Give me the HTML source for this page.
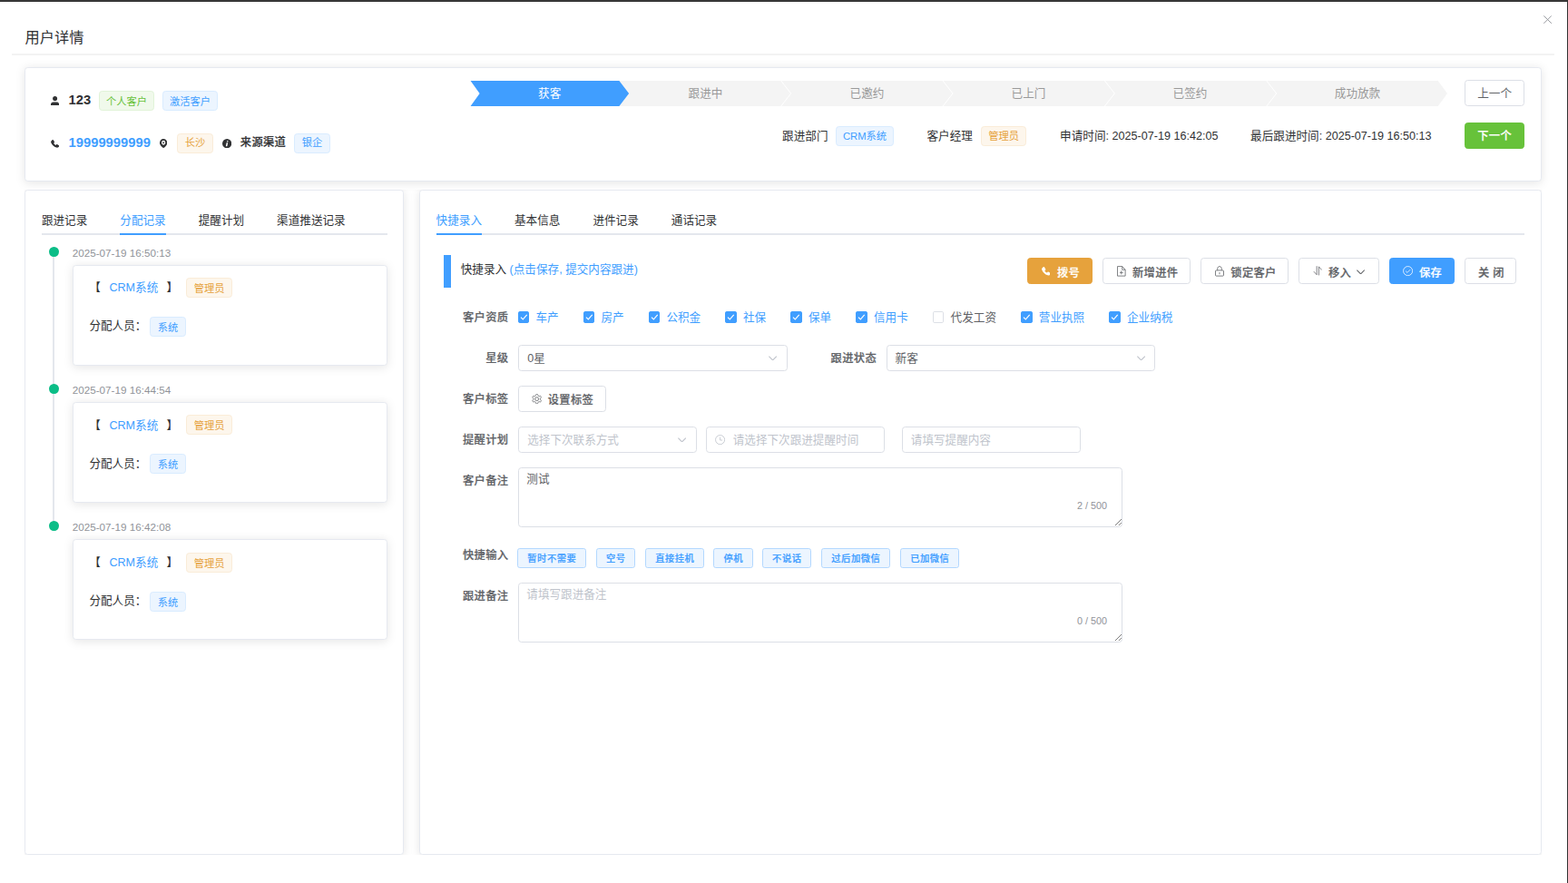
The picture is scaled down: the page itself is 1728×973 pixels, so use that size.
<!DOCTYPE html>
<html lang="zh-CN">
<head>
<meta charset="utf-8">
<title>用户详情</title>
<style>
html,body{margin:0;padding:0;background:#fff;width:1728px;height:973px;overflow:hidden}
body{font-family:"Liberation Sans","Noto Sans CJK SC",sans-serif;color:#303133;position:relative}
#stage{position:absolute;left:0;top:0;width:1920px;height:1082px;zoom:0.9;background:#fff;overflow:hidden}
@supports not (zoom:0.9){#stage{transform:scale(0.9);transform-origin:0 0}}
.abs{position:absolute;box-sizing:border-box}
.tx{white-space:nowrap}
.b{font-weight:500;-webkit-text-stroke:0.25px currentColor;font-size:13.6px !important;letter-spacing:0.4px;margin-top:0.9px}
.bb{font-weight:700}
.card{background:#fff;border:1px solid #e6e9f0;border-radius:4px;box-shadow:0 2px 12px 0 rgba(0,0,0,.1)}
.tag{display:flex;align-items:center;justify-content:center;border:1px solid #d9ecff;background:#ecf5ff;color:#409EFF;border-radius:4px;white-space:nowrap;line-height:1}
.tag span{position:relative;top:0px}
.tag.success{background:#f0f9eb;border-color:#e1f3d8;color:#67c23a}
.tag.warning{background:#fdf6ec;border-color:#faecd8;color:#e6a23c}
.tag.quick{border-color:#b3d8ff;font-weight:500;-webkit-text-stroke:0.25px currentColor;border-radius:3px;font-size:11.4px !important;letter-spacing:0.6px}
.tag.quick span{top:1.5px;left:0.3px}
.btn{border:1px solid #DCDFE6;background:#fff;border-radius:4px}
.btn.nb{border-color:transparent}
.btn.success{background:#67C23A;border-color:#67C23A}
.btn.warning{background:#E6A23C;border-color:#E6A23C}
.btn.primary{background:#409EFF;border-color:#409EFF}
.cb{border:1px solid #DCDFE6;border-radius:2px;background:#fff}
.cb.on{background:#409EFF;border-color:#409EFF}
.cb svg{position:absolute;left:-1px;top:-1px;width:14px;height:14px}
.inp{border:1px solid #DCDFE6;border-radius:4px;background:#fff}
.ta{border:1px solid #DCDFE6;border-radius:4px;background:#fff}
#topbar{position:absolute;left:0;top:0;width:1728px;height:2px;background:linear-gradient(#3c3c3c 0,#3c3c3c 1px,#2f2f2f 1px,#2f2f2f 2px)}
#rightbar{position:absolute;left:1727px;top:0;width:1px;height:973px;background:#313131}
</style>
</head>
<body>
<div id="stage">
<div class="abs tx " style="left:30.67px;top:33.30px;font-size:18px;line-height:26px;color:#303133">用户详情</div>
<svg class="abs" style="left:1889.56px;top:19.33px;width:10.22px;height:10.22px;" viewBox="0 0 100 100" preserveAspectRatio="none"><path d="M4 4 L96 96 M96 4 L4 96" fill="none" stroke="#909399" stroke-width="10"/></svg>
<div class="abs " style="left:14.44px;top:65.56px;width:1888.89px;height:2.22px;background:#f3f3f3"></div>
<div class="abs card" style="left:30px;top:82.22px;width:1857.78px;height:140px;"></div>
<div class="abs" style="left:30px;top:232.22px;width:1857.78px;height:814.44px;overflow:hidden">
<div class="abs card" style="left:0px;top:0px;width:464.67px;height:814.44px;"></div>
<div class="abs card" style="left:483.33px;top:0px;width:1374.44px;height:814.44px;"></div>
</div>
<svg class="abs" style="left:62.11px;top:118.11px;width:10.22px;height:11.22px;" viewBox="0 0 100 100" preserveAspectRatio="none"><ellipse cx="50" cy="26" rx="27" ry="26" fill="#303133"/><path d="M0 100 L0 90 C0 75 12 65 28 65 L72 65 C88 65 100 75 100 90 L100 100 Z" fill="#303133"/></svg>
<div class="abs tx bb" style="left:84px;top:110.87px;font-size:16.4px;line-height:24.4px;color:#303133">123</div>
<div class="abs tag success" style="left:121.13px;top:111.13px;width:67.78px;height:24.44px;font-size:12.5px;"><span style="top:2px">个人客户</span></div>
<div class="abs tag primary" style="left:198.91px;top:111.13px;width:67.78px;height:24.44px;font-size:12.5px;"><span style="top:2px">激活客户</span></div>
<svg class="abs" style="left:62.11px;top:171px;width:10.44px;height:9.78px;" viewBox="0 0 100 100" preserveAspectRatio="none"><path d="M17 3 C22 -1 28 0 31 6 L42 25 C45 30 44 34 40 38 L33 44 C38 55 47 64 58 69 L64 62 C67 58 72 57 77 60 L95 71 C101 74 101 80 97 84 L88 93 C82 99 74 100 65 97 C37 87 14 64 3 36 C0 27 1 19 7 13 Z" fill="#303133"/></svg>
<div class="abs tx bb" style="left:84px;top:163.20px;font-size:16.4px;line-height:24.4px;color:#409EFF">19999999999</div>
<svg class="abs" style="left:195.78px;top:170.22px;width:9.22px;height:11.11px;" viewBox="0 0 100 100" preserveAspectRatio="none"><path d="M50 0 C22 0 0 20 0 45 C0 70 32 92 50 100 C68 92 100 70 100 45 C100 20 78 0 50 0 Z" fill="#303133"/><circle cx="50" cy="43" r="25" fill="#fff"/><circle cx="50" cy="43" r="10" fill="#303133"/></svg>
<div class="abs tag warning" style="left:216.69px;top:163.36px;width:44.44px;height:24.44px;font-size:12.5px;"><span>长沙</span></div>
<svg class="abs" style="left:271.78px;top:170px;width:11.44px;height:11.44px;" viewBox="0 0 100 100" preserveAspectRatio="none"><circle cx="50" cy="50" r="50" fill="#303133"/><circle cx="56" cy="27" r="7.5" fill="#fff"/><path d="M45 41 L60 41 L52 80 L37 80 Z" fill="#fff"/></svg>
<div class="abs tx b" style="left:294.22px;top:163.86px;font-size:14px;line-height:22px;color:#303133">来源渠道</div>
<div class="abs tag primary" style="left:360.02px;top:163.36px;width:44.44px;height:24.44px;font-size:12.5px;"><span>银企</span></div>
<svg class="abs" style="left:0;top:0;width:1920px;height:140px" viewBox="0 0 1920 140"><polygon points="758.22,98.89 1760.78,98.89 1772.22,114.44 1760.78,130 758.22,130" fill="#f4f4f4"/><polyline points="956.39,98.89 968.5,114.44 956.39,130" fill="none" stroke="#fff" stroke-width="1.1"/><polyline points="1154.56,98.89 1166.67,114.44 1154.56,130" fill="none" stroke="#fff" stroke-width="1.1"/><polyline points="1352.72,98.89 1364.83,114.44 1352.72,130" fill="none" stroke="#fff" stroke-width="1.1"/><polyline points="1550.89,98.89 1563,114.44 1550.89,130" fill="none" stroke="#fff" stroke-width="1.1"/><polygon points="576.17,98.89 758.22,98.89 770.11,114.44 758.22,130 576.17,130 587.33,114.44" fill="#409EFF"/></svg>
<div class="abs tx " style="left:573px;top:104.97px;font-size:14px;line-height:22px;width:200px;text-align:center;color:#fff">获客</div>
<div class="abs tx " style="left:763.89px;top:104.97px;font-size:14px;line-height:22px;width:200px;text-align:center;color:#999">跟进中</div>
<div class="abs tx " style="left:961.67px;top:104.97px;font-size:14px;line-height:22px;width:200px;text-align:center;color:#999">已邀约</div>
<div class="abs tx " style="left:1159.44px;top:104.97px;font-size:14px;line-height:22px;width:200px;text-align:center;color:#999">已上门</div>
<div class="abs tx " style="left:1357.22px;top:104.97px;font-size:14px;line-height:22px;width:200px;text-align:center;color:#999">已签约</div>
<div class="abs tx " style="left:1562.22px;top:104.97px;font-size:14px;line-height:22px;width:200px;text-align:center;color:#999">成功放款</div>
<div class="abs btn" style="left:1793.33px;top:98.22px;width:73.33px;height:32px;"></div>
<div class="abs tx " style="left:1796.78px;top:104.30px;font-size:14px;line-height:22px;width:66.67px;text-align:center;color:#606266">上一个</div>
<div class="abs btn success nb" style="left:1793.33px;top:150.11px;width:73.33px;height:32px;"></div>
<div class="abs tx b" style="left:1796.78px;top:156.30px;font-size:14px;line-height:22px;width:66.67px;text-align:center;color:#fff">下一个</div>
<div class="abs tx " style="left:957.89px;top:156.52px;font-size:14px;line-height:22px;color:#303133">跟进部门</div>
<div class="abs tag primary" style="left:1023.36px;top:154.47px;width:71.11px;height:24.44px;font-size:12.5px;"><span style="top:1px">CRM系统</span></div>
<div class="abs tx " style="left:1135px;top:156.52px;font-size:14px;line-height:22px;color:#303133">客户经理</div>
<div class="abs tag warning" style="left:1201.13px;top:154.47px;width:55.56px;height:24.44px;font-size:12.5px;"><span style="top:1px">管理员</span></div>
<div class="abs tx " style="left:1297.89px;top:156.52px;font-size:14px;line-height:22px;color:#303133">申请时间: 2025-07-19 16:42:05</div>
<div class="abs tx " style="left:1531.22px;top:156.52px;font-size:14px;line-height:22px;color:#303133">最后跟进时间: 2025-07-19 16:50:13</div>
<div class="abs " style="left:51px;top:285.61px;width:423.33px;height:2.22px;background:#E4E7ED"></div>
<div class="abs tx " style="left:51px;top:259.86px;font-size:14px;line-height:22px;color:#303133">跟进记录</div>
<div class="abs tx " style="left:147px;top:259.86px;font-size:14px;line-height:22px;color:#409EFF">分配记录</div>
<div class="abs " style="left:147px;top:285.61px;width:56px;height:2.22px;background:#409EFF"></div>
<div class="abs tx " style="left:243px;top:259.86px;font-size:14px;line-height:22px;color:#303133">提醒计划</div>
<div class="abs tx " style="left:339px;top:259.86px;font-size:14px;line-height:22px;color:#303133">渠道推送记录</div>
<div class="abs " style="left:534px;top:285.61px;width:1332.67px;height:2.22px;background:#E4E7ED"></div>
<div class="abs tx " style="left:534px;top:259.86px;font-size:14px;line-height:22px;color:#409EFF">快捷录入</div>
<div class="abs " style="left:534px;top:285.61px;width:56px;height:2.22px;background:#409EFF"></div>
<div class="abs tx " style="left:630px;top:259.86px;font-size:14px;line-height:22px;color:#303133">基本信息</div>
<div class="abs tx " style="left:726px;top:259.86px;font-size:14px;line-height:22px;color:#303133">进件记录</div>
<div class="abs tx " style="left:822px;top:259.86px;font-size:14px;line-height:22px;color:#303133">通话记录</div>
<div class="abs " style="left:64.5px;top:308.22px;width:2.22px;height:336px;background:#E4E7ED"></div>
<div class="abs " style="left:60px;top:302.22px;width:12px;height:12px;background:#0bbd87;border-radius:50%"></div>
<div class="abs tx " style="left:88.56px;top:299.89px;font-size:13px;line-height:21px;color:#909399">2025-07-19 16:50:13</div>
<div class="abs card" style="left:89.33px;top:324.33px;width:385px;height:123.33px;"></div>
<div class="abs tx " style="left:109.22px;top:342.71px;font-size:14px;line-height:22px;color:#303133">【</div>
<div class="abs tx " style="left:133.78px;top:342.71px;font-size:14px;line-height:22px;color:#409EFF">CRM系统</div>
<div class="abs tx " style="left:203.89px;top:342.71px;font-size:14px;line-height:22px;color:#303133">】</div>
<div class="abs tag warning" style="left:227.8px;top:340.02px;width:56.67px;height:24.44px;font-size:12.5px;"><span style="top:2px">管理员</span></div>
<div class="abs tx " style="left:109.33px;top:389.30px;font-size:14px;line-height:22px;color:#303133">分配人员：</div>
<div class="abs tag primary" style="left:183.36px;top:387.8px;width:44.44px;height:24.44px;font-size:12.5px;"><span style="top:2px">系统</span></div>
<div class="abs " style="left:60px;top:470.22px;width:12px;height:12px;background:#0bbd87;border-radius:50%"></div>
<div class="abs tx " style="left:88.56px;top:467.89px;font-size:13px;line-height:21px;color:#909399">2025-07-19 16:44:54</div>
<div class="abs card" style="left:89.33px;top:492.33px;width:385px;height:123.33px;"></div>
<div class="abs tx " style="left:109.22px;top:510.71px;font-size:14px;line-height:22px;color:#303133">【</div>
<div class="abs tx " style="left:133.78px;top:510.71px;font-size:14px;line-height:22px;color:#409EFF">CRM系统</div>
<div class="abs tx " style="left:203.89px;top:510.71px;font-size:14px;line-height:22px;color:#303133">】</div>
<div class="abs tag warning" style="left:227.8px;top:507.8px;width:56.67px;height:24.44px;font-size:12.5px;"><span style="top:2px">管理员</span></div>
<div class="abs tx " style="left:109.33px;top:557.30px;font-size:14px;line-height:22px;color:#303133">分配人员：</div>
<div class="abs tag primary" style="left:183.36px;top:555.58px;width:44.44px;height:24.44px;font-size:12.5px;"><span style="top:2px">系统</span></div>
<div class="abs " style="left:60px;top:638.22px;width:12px;height:12px;background:#0bbd87;border-radius:50%"></div>
<div class="abs tx " style="left:88.56px;top:635.89px;font-size:13px;line-height:21px;color:#909399">2025-07-19 16:42:08</div>
<div class="abs card" style="left:89.33px;top:660.33px;width:385px;height:123.33px;"></div>
<div class="abs tx " style="left:109.22px;top:678.71px;font-size:14px;line-height:22px;color:#303133">【</div>
<div class="abs tx " style="left:133.78px;top:678.71px;font-size:14px;line-height:22px;color:#409EFF">CRM系统</div>
<div class="abs tx " style="left:203.89px;top:678.71px;font-size:14px;line-height:22px;color:#303133">】</div>
<div class="abs tag warning" style="left:227.8px;top:676.69px;width:56.67px;height:24.44px;font-size:12.5px;"><span style="top:2px">管理员</span></div>
<div class="abs tx " style="left:109.33px;top:725.30px;font-size:14px;line-height:22px;color:#303133">分配人员：</div>
<div class="abs tag primary" style="left:183.36px;top:724.47px;width:44.44px;height:24.44px;font-size:12.5px;"><span style="top:2px">系统</span></div>
<div class="abs " style="left:543.33px;top:312.22px;width:8.89px;height:40px;background:#409EFF"></div>
<div class="abs tx " style="left:564.11px;top:320.41px;font-size:14px;line-height:22px;color:#303133">快捷录入 <span style="color:#409EFF">(点击保存, 提交内容跟进)</span></div>
<div class="abs btn warning nb" style="left:1257.89px;top:316.11px;width:79.89px;height:32px"></div>
<svg class="abs" style="left:1275px;top:327.11px;width:11.11px;height:10.67px;" viewBox="0 0 100 100" preserveAspectRatio="none"><path d="M17 3 C22 -1 28 0 31 6 L42 25 C45 30 44 34 40 38 L33 44 C38 55 47 64 58 69 L64 62 C67 58 72 57 77 60 L95 71 C101 74 101 80 97 84 L88 93 C82 99 74 100 65 97 C37 87 14 64 3 36 C0 27 1 19 7 13 Z" fill="#fff"/></svg>
<div class="abs tx b" style="left:1294.44px;top:323.30px;font-size:14px;line-height:22px;color:#fff">拨号</div>
<div class="abs btn " style="left:1350.28px;top:316.11px;width:107.39px;height:32px"></div>
<svg class="abs" style="left:1367.78px;top:325.78px;width:10.67px;height:13px;" viewBox="0 0 100 100" preserveAspectRatio="none"><path d="M5 5 H60 L95 36 V95 H5 Z" fill="none" stroke="#606266" stroke-width="7.5" stroke-linejoin="round"/><path d="M60 5 V36 H95" fill="none" stroke="#606266" stroke-width="7.5" stroke-linejoin="round"/><path d="M31 63 H69 M50 46 V80" fill="none" stroke="#606266" stroke-width="7.5"/></svg>
<div class="abs tx b" style="left:1386.67px;top:323.30px;font-size:14px;line-height:22px;color:#606266">新增进件</div>
<div class="abs btn " style="left:1470.11px;top:316.11px;width:107.39px;height:32px"></div>
<svg class="abs" style="left:1487.56px;top:325.78px;width:11.11px;height:13px;" viewBox="0 0 100 100" preserveAspectRatio="none"><rect x="5" y="42" width="90" height="53" rx="9" fill="none" stroke="#606266" stroke-width="7.5"/><path d="M27 42 V28 C27 12 38 5 50 5 C62 5 73 12 73 28 V42" fill="none" stroke="#606266" stroke-width="7.5"/><path d="M50 60 V79" stroke="#606266" stroke-width="7.5"/></svg>
<div class="abs tx b" style="left:1507px;top:323.30px;font-size:14px;line-height:22px;color:#606266">锁定客户</div>
<div class="abs btn " style="left:1590px;top:316.11px;width:98.61px;height:32px"></div>
<svg class="abs" style="left:1607.33px;top:325.78px;width:11.44px;height:11.78px;" viewBox="0 0 100 100" preserveAspectRatio="none"><path d="M40 2 V92 L8 58" fill="none" stroke="#606266" stroke-width="7.5" stroke-linejoin="miter"/><path d="M62 98 V8 L94 42" fill="none" stroke="#606266" stroke-width="7.5" stroke-linejoin="miter"/></svg>
<div class="abs tx b" style="left:1626.67px;top:323.30px;font-size:14px;line-height:22px;color:#606266">移入</div>
<svg class="abs" style="left:1661.11px;top:330px;width:10.11px;height:6px;" viewBox="0 0 100 100" preserveAspectRatio="none"><path d="M4 10 L50 90 L96 10" fill="none" stroke="#606266" stroke-width="1.2" vector-effect="non-scaling-stroke"/></svg>
<div class="abs btn primary nb" style="left:1701.11px;top:316.11px;width:79.89px;height:32px"></div>
<svg class="abs" style="left:1717.67px;top:325.78px;width:12.44px;height:12.44px;" viewBox="0 0 100 100" preserveAspectRatio="none"><circle cx="50" cy="50" r="45" fill="none" stroke="#fff" stroke-width="7"/><path d="M28 51 L44 66 L73 37" fill="none" stroke="#fff" stroke-width="7"/></svg>
<div class="abs tx b" style="left:1737.78px;top:323.30px;font-size:14px;line-height:22px;color:#fff">保存</div>
<div class="abs btn " style="left:1793.06px;top:316.11px;width:63.5px;height:32px"></div>
<div class="abs tx b" style="left:1810px;top:323.30px;font-size:14px;line-height:22px;color:#606266">关 闭</div>
<div class="abs tx b" style="left:489.33px;top:378.30px;font-size:14px;line-height:22px;width:133.33px;text-align:right;color:#606266">客户资质</div>
<div class="abs cb on" style="left:634px;top:381.22px;width:14px;height:14px;"><svg viewBox="0 0 14 14"><path d="M3.3 7.3 L5.9 9.9 L10.8 4.3" fill="none" stroke="#fff" stroke-width="1.3"/></svg></div>
<div class="abs tx " style="left:656px;top:378.63px;font-size:14px;line-height:22px;color:#409EFF">车产</div>
<div class="abs cb on" style="left:714px;top:381.22px;width:14px;height:14px;"><svg viewBox="0 0 14 14"><path d="M3.3 7.3 L5.9 9.9 L10.8 4.3" fill="none" stroke="#fff" stroke-width="1.3"/></svg></div>
<div class="abs tx " style="left:736px;top:378.63px;font-size:14px;line-height:22px;color:#409EFF">房产</div>
<div class="abs cb on" style="left:794px;top:381.22px;width:14px;height:14px;"><svg viewBox="0 0 14 14"><path d="M3.3 7.3 L5.9 9.9 L10.8 4.3" fill="none" stroke="#fff" stroke-width="1.3"/></svg></div>
<div class="abs tx " style="left:816px;top:378.63px;font-size:14px;line-height:22px;color:#409EFF">公积金</div>
<div class="abs cb on" style="left:888px;top:381.22px;width:14px;height:14px;"><svg viewBox="0 0 14 14"><path d="M3.3 7.3 L5.9 9.9 L10.8 4.3" fill="none" stroke="#fff" stroke-width="1.3"/></svg></div>
<div class="abs tx " style="left:910px;top:378.63px;font-size:14px;line-height:22px;color:#409EFF">社保</div>
<div class="abs cb on" style="left:968px;top:381.22px;width:14px;height:14px;"><svg viewBox="0 0 14 14"><path d="M3.3 7.3 L5.9 9.9 L10.8 4.3" fill="none" stroke="#fff" stroke-width="1.3"/></svg></div>
<div class="abs tx " style="left:990px;top:378.63px;font-size:14px;line-height:22px;color:#409EFF">保单</div>
<div class="abs cb on" style="left:1048px;top:381.22px;width:14px;height:14px;"><svg viewBox="0 0 14 14"><path d="M3.3 7.3 L5.9 9.9 L10.8 4.3" fill="none" stroke="#fff" stroke-width="1.3"/></svg></div>
<div class="abs tx " style="left:1070px;top:378.63px;font-size:14px;line-height:22px;color:#409EFF">信用卡</div>
<div class="abs cb" style="left:1142px;top:381.22px;width:14px;height:14px;"></div>
<div class="abs tx " style="left:1164px;top:378.63px;font-size:14px;line-height:22px;color:#606266">代发工资</div>
<div class="abs cb on" style="left:1250px;top:381.22px;width:14px;height:14px;"><svg viewBox="0 0 14 14"><path d="M3.3 7.3 L5.9 9.9 L10.8 4.3" fill="none" stroke="#fff" stroke-width="1.3"/></svg></div>
<div class="abs tx " style="left:1272px;top:378.63px;font-size:14px;line-height:22px;color:#409EFF">营业执照</div>
<div class="abs cb on" style="left:1358px;top:381.22px;width:14px;height:14px;"><svg viewBox="0 0 14 14"><path d="M3.3 7.3 L5.9 9.9 L10.8 4.3" fill="none" stroke="#fff" stroke-width="1.3"/></svg></div>
<div class="abs tx " style="left:1380px;top:378.63px;font-size:14px;line-height:22px;color:#409EFF">企业纳税</div>
<div class="abs tx b" style="left:489.33px;top:428.52px;font-size:14px;line-height:22px;width:133.33px;text-align:right;color:#606266">星级</div>
<div class="abs inp" style="left:634.44px;top:422.22px;width:329.78px;height:32px"></div>
<div class="abs tx " style="left:645.78px;top:428.52px;font-size:14px;line-height:22px;color:#606266">0星</div>
<svg class="abs" style="left:940.56px;top:435.33px;width:10.22px;height:6px;" viewBox="0 0 100 100" preserveAspectRatio="none"><path d="M4 10 L50 90 L96 10" fill="none" stroke="#C0C4CC" stroke-width="1.3" vector-effect="non-scaling-stroke"/></svg>
<div class="abs tx b" style="left:940px;top:428.52px;font-size:14px;line-height:22px;width:133.33px;text-align:right;color:#606266">跟进状态</div>
<div class="abs inp" style="left:1085.22px;top:422.22px;width:329.78px;height:32px"></div>
<div class="abs tx " style="left:1096.22px;top:428.52px;font-size:14px;line-height:22px;color:#606266">新客</div>
<svg class="abs" style="left:1391.89px;top:435.33px;width:10.22px;height:6px;" viewBox="0 0 100 100" preserveAspectRatio="none"><path d="M4 10 L50 90 L96 10" fill="none" stroke="#C0C4CC" stroke-width="1.3" vector-effect="non-scaling-stroke"/></svg>
<div class="abs tx b" style="left:489.33px;top:478.52px;font-size:14px;line-height:22px;width:133.33px;text-align:right;color:#606266">客户标签</div>
<div class="abs btn " style="left:634.44px;top:472.22px;width:107.44px;height:32px"></div>
<svg class="abs" style="left:650.67px;top:481.89px;width:12.56px;height:12.56px;" viewBox="0 0 100 100" preserveAspectRatio="none"><polygon points="83.0,50.0 83.0,51.7 83.0,53.5 83.4,55.3 84.8,57.4 88.2,60.2 91.3,63.4 92.2,66.2 91.8,68.6 91.0,70.9 89.8,73.0 88.5,75.0 87.0,76.9 85.1,78.5 82.3,79.1 77.9,77.9 73.8,76.4 71.3,76.2 69.5,76.9 68.0,77.7 66.5,78.6 65.0,79.4 63.5,80.3 62.1,81.5 61.0,83.8 60.2,88.2 59.0,92.5 57.1,94.7 54.8,95.5 52.4,95.9 50.0,96.0 47.6,95.9 45.2,95.5 42.9,94.7 41.0,92.5 39.8,88.2 39.0,83.8 37.9,81.5 36.5,80.3 35.0,79.4 33.5,78.6 32.0,77.7 30.5,76.9 28.7,76.2 26.2,76.4 22.1,77.9 17.7,79.1 14.9,78.5 13.0,76.9 11.5,75.0 10.2,73.0 9.0,70.9 8.2,68.6 7.8,66.2 8.7,63.4 11.8,60.2 15.2,57.4 16.6,55.3 17.0,53.5 17.0,51.7 17.0,50.0 17.0,48.3 17.0,46.5 16.6,44.7 15.2,42.6 11.8,39.8 8.7,36.6 7.8,33.8 8.2,31.4 9.0,29.1 10.2,27.0 11.5,25.0 13.0,23.1 14.9,21.5 17.7,20.9 22.1,22.1 26.2,23.6 28.7,23.8 30.5,23.1 32.0,22.3 33.5,21.4 35.0,20.6 36.5,19.7 37.9,18.5 39.0,16.2 39.8,11.8 41.0,7.5 42.9,5.3 45.2,4.5 47.6,4.1 50.0,4.0 52.4,4.1 54.8,4.5 57.1,5.3 59.0,7.5 60.2,11.8 61.0,16.2 62.1,18.5 63.5,19.7 65.0,20.6 66.5,21.4 68.0,22.3 69.5,23.1 71.3,23.8 73.8,23.6 77.9,22.1 82.3,20.9 85.1,21.5 87.0,23.1 88.5,25.0 89.8,27.0 91.0,29.1 91.8,31.4 92.2,33.8 91.3,36.6 88.2,39.8 84.8,42.6 83.4,44.7 83.0,46.5 83.0,48.3" fill="none" stroke="#606266" stroke-width="7.5" stroke-linejoin="round"/><circle cx="50" cy="50" r="17" fill="none" stroke="#606266" stroke-width="7.5"/></svg>
<div class="abs tx b" style="left:670.78px;top:479.41px;font-size:14px;line-height:22px;color:#606266">设置标签</div>
<div class="abs tx b" style="left:489.33px;top:528.30px;font-size:14px;line-height:22px;width:133.33px;text-align:right;color:#606266">提醒计划</div>
<div class="abs inp" style="left:634.44px;top:522.22px;width:218.67px;height:32px"></div>
<div class="abs tx " style="left:645.78px;top:528.52px;font-size:14px;line-height:22px;color:#C0C4CC">选择下次联系方式</div>
<svg class="abs" style="left:829.89px;top:535.33px;width:10.22px;height:6px;" viewBox="0 0 100 100" preserveAspectRatio="none"><path d="M4 10 L50 90 L96 10" fill="none" stroke="#C0C4CC" stroke-width="1.3" vector-effect="non-scaling-stroke"/></svg>
<div class="abs inp" style="left:864.56px;top:522.22px;width:218.56px;height:32px"></div>
<svg class="abs" style="left:875.33px;top:532px;width:12.44px;height:12.44px;" viewBox="0 0 100 100" preserveAspectRatio="none"><circle cx="50" cy="50" r="45" fill="none" stroke="#C0C4CC" stroke-width="7.5"/><path d="M50 24 V54 H72" fill="none" stroke="#C0C4CC" stroke-width="7.5"/></svg>
<div class="abs tx " style="left:897.44px;top:528.52px;font-size:14px;line-height:22px;color:#C0C4CC">请选择下次跟进提醒时间</div>
<div class="abs inp" style="left:1104.56px;top:522.22px;width:219.33px;height:32px"></div>
<div class="abs tx " style="left:1115.33px;top:528.52px;font-size:14px;line-height:22px;color:#C0C4CC">请填写提醒内容</div>
<div class="abs tx b" style="left:489.33px;top:578.08px;font-size:14px;line-height:22px;width:133.33px;text-align:right;color:#606266">客户备注</div>
<div class="abs ta" style="left:634.44px;top:572.44px;width:740px;height:73.11px;"></div>
<div class="abs tx " style="left:644.78px;top:577.19px;font-size:14px;line-height:22px;color:#606266">测试</div>
<div class="abs tx " style="left:1222.33px;top:608.63px;font-size:12px;line-height:20px;width:133.33px;text-align:right;color:#909399">2 / 500</div>
<svg class="abs" style="left:1365.56px;top:636px;width:7.78px;height:7.78px;" viewBox="0 0 100 100" preserveAspectRatio="none"><path d="M0 100 L100 0 M55 100 L100 55" fill="none" stroke="#555" stroke-width="11"/></svg>
<div class="abs tx b" style="left:489.33px;top:669.52px;font-size:14px;line-height:22px;width:133.33px;text-align:right;color:#606266">快捷输入</div>
<div class="abs tag quick" style="left:633.36px;top:671.13px;width:84.44px;height:24.44px;font-size:12.5px;"><span>暂时不需要</span></div>
<div class="abs tag quick" style="left:730.02px;top:671.13px;width:47.78px;height:24.44px;font-size:12.5px;"><span>空号</span></div>
<div class="abs tag quick" style="left:790.02px;top:671.13px;width:72.22px;height:24.44px;font-size:12.5px;"><span>直接挂机</span></div>
<div class="abs tag quick" style="left:873.36px;top:671.13px;width:48.89px;height:24.44px;font-size:12.5px;"><span>停机</span></div>
<div class="abs tag quick" style="left:933.36px;top:671.13px;width:60px;height:24.44px;font-size:12.5px;"><span>不说话</span></div>
<div class="abs tag quick" style="left:1005.58px;top:671.13px;width:84.44px;height:24.44px;font-size:12.5px;"><span>过后加微信</span></div>
<div class="abs tag quick" style="left:1102.24px;top:671.13px;width:72.22px;height:24.44px;font-size:12.5px;"><span>已加微信</span></div>
<div class="abs tx b" style="left:489.33px;top:719.41px;font-size:14px;line-height:22px;width:133.33px;text-align:right;color:#606266">跟进备注</div>
<div class="abs ta" style="left:634.44px;top:713.56px;width:740px;height:73.11px;"></div>
<div class="abs tx " style="left:644.78px;top:718.30px;font-size:14px;line-height:22px;color:#C0C4CC">请填写跟进备注</div>
<div class="abs tx " style="left:1222.33px;top:749.74px;font-size:12px;line-height:20px;width:133.33px;text-align:right;color:#909399">0 / 500</div>
<svg class="abs" style="left:1365.56px;top:777.11px;width:7.78px;height:7.78px;" viewBox="0 0 100 100" preserveAspectRatio="none"><path d="M0 100 L100 0 M55 100 L100 55" fill="none" stroke="#555" stroke-width="11"/></svg>
</div>
<div id="topbar"></div>
<div id="rightbar"></div>
</body>
</html>
